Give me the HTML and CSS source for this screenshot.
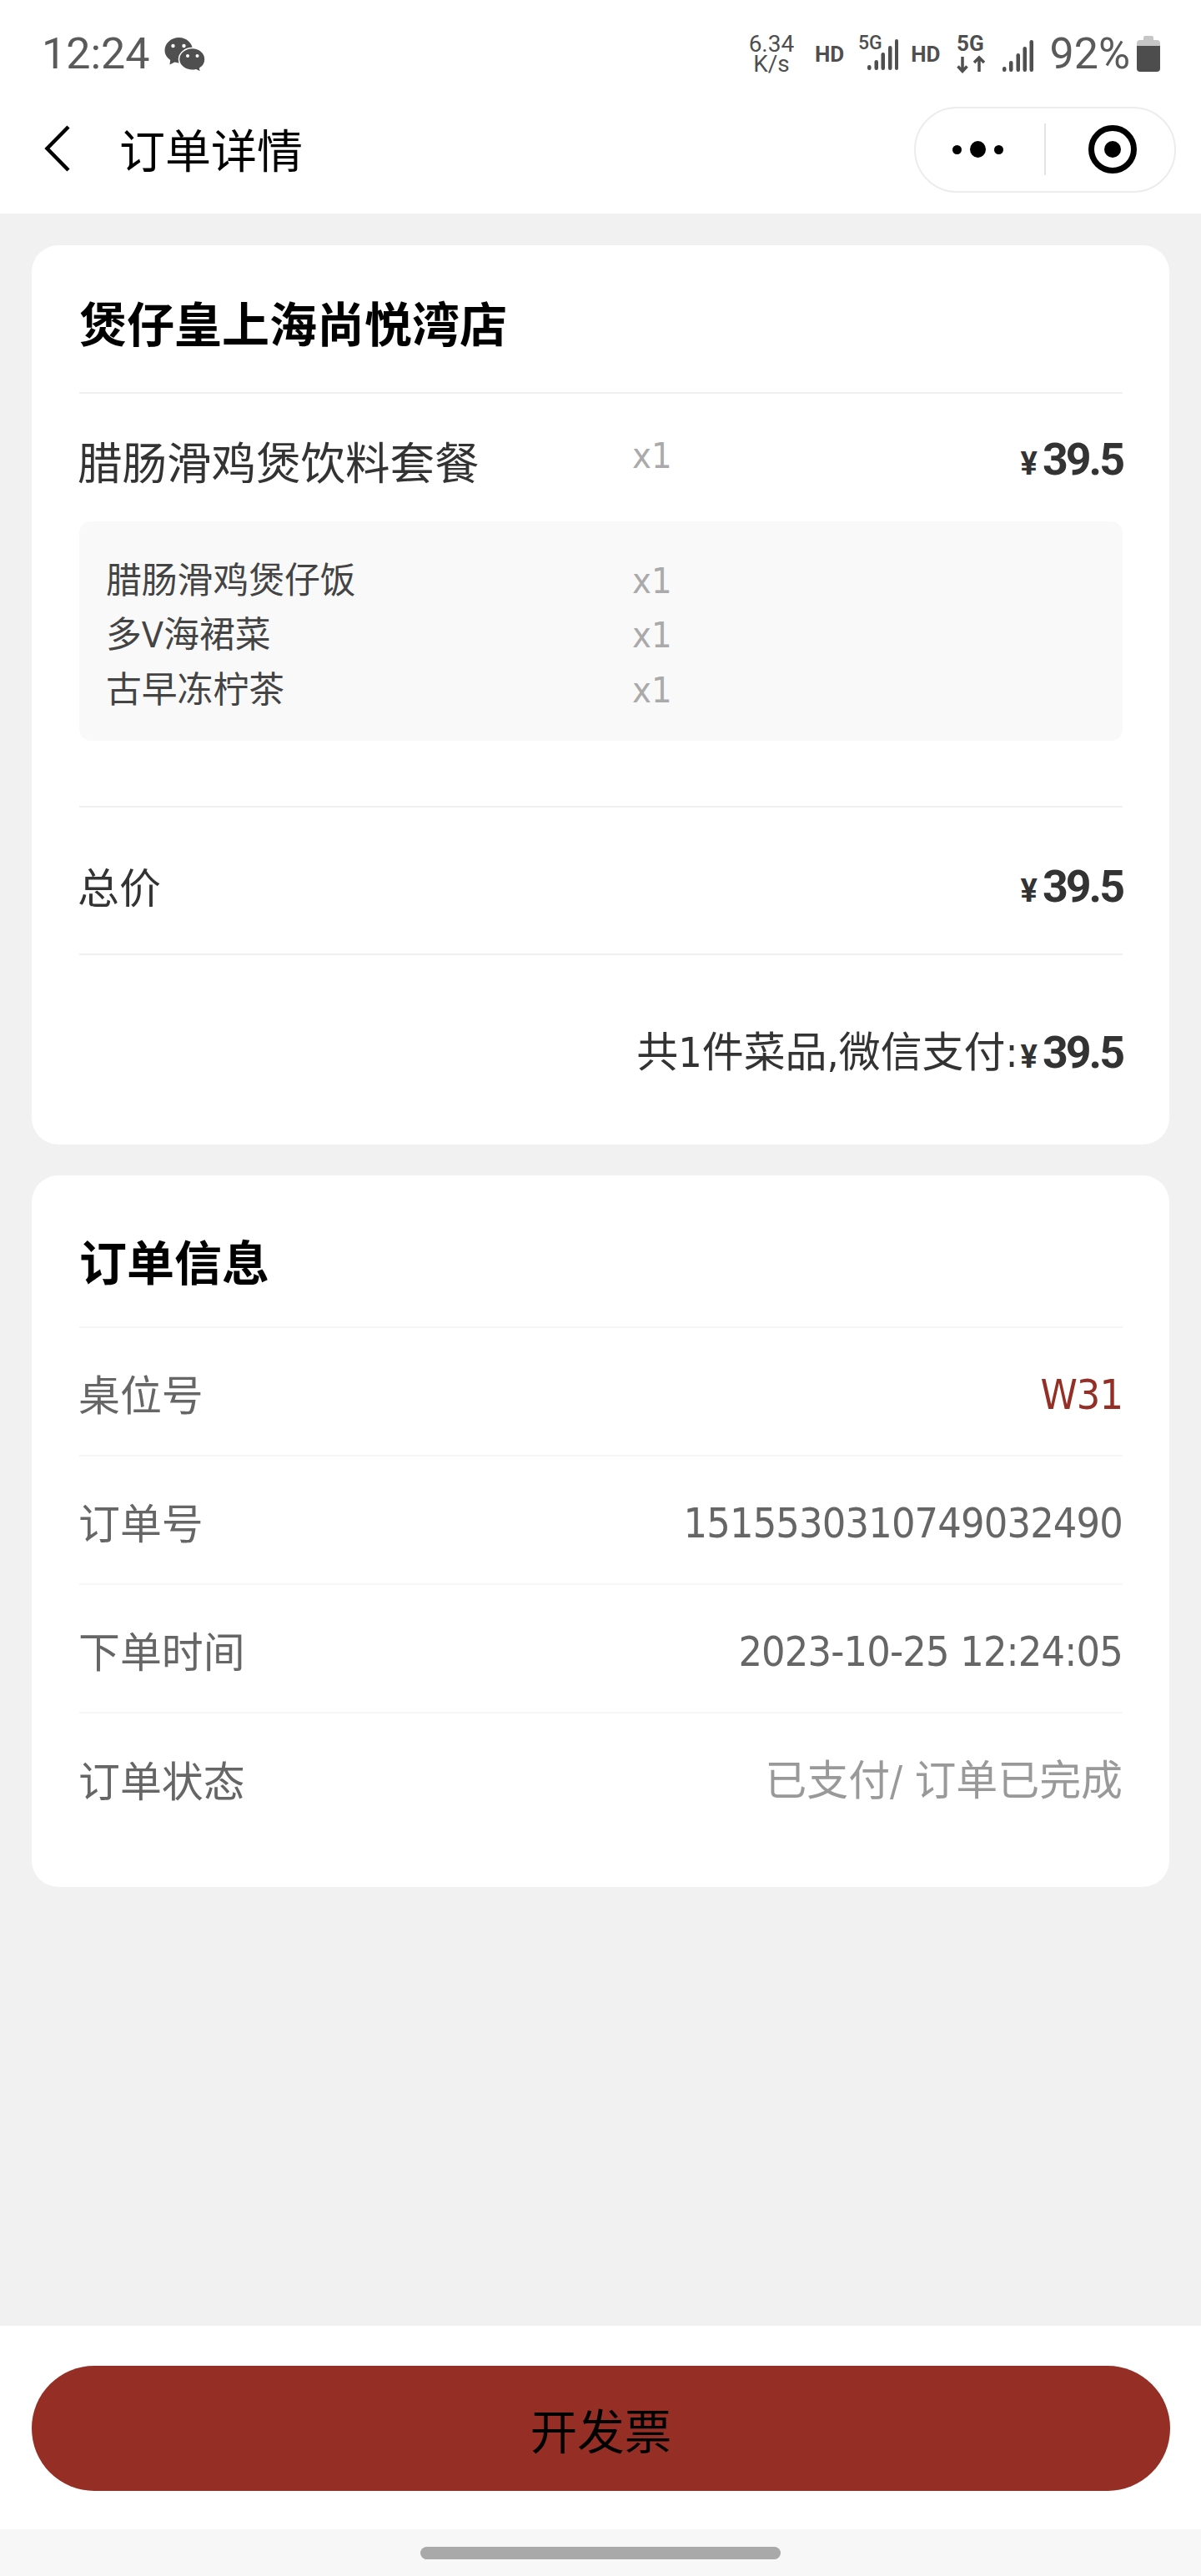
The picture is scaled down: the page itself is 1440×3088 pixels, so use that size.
FILE: index.html
```html
<!DOCTYPE html>
<html lang="zh-CN">
<head>
<meta charset="utf-8">
<title>订单详情</title>
<link rel="stylesheet" href="styles.css">
</head>
<body>
<header class="header">
  <div class="status">
    <span class="time">12:24</span>
    <svg class="wechat" width="50" height="42" viewBox="0 0 50 42">
      <path fill="#4f4f4f" d="M17.5 0C26.6 0 34 6.800 34 15.200S26.600 30.400 17.500 30.400c-1.800 0-3.500-.3-5.100-.8L6.500 32.500l.7-5.600C3 24.100.5 20 .5 15.200.5 6.800 8.400 0 17.500 0z"/>
      <circle cx="10.500" cy="10" r="2.200" fill="#fff"/>
      <circle cx="23.500" cy="10" r="2.200" fill="#fff"/>
      <path fill="#4f4f4f" stroke="#fff" stroke-width="1.500" d="M33.500 12.500C42 12.500 49 18.500 49 26c0 4.500-2.500 8.500-6.300 11l1 4.500-5.500-2.800c-1.500.4-3 .6-4.700.6C25 39.300 17.500 33.300 17.500 26S25 12.500 33.500 12.500z"/>
      <circle cx="28" cy="22" r="2" fill="#fff"/>
      <circle cx="39.500" cy="22" r="2" fill="#fff"/>
    </svg>
    <div class="status-right">
      <div class="speed">6.34<br>K/s</div>
      <span class="hd hd-first">HD</span>
      <svg class="sig-a" width="48" height="50" viewBox="0 -6 48 50">
        <text class="sig-label" x="0" y="16">5G</text>
        <rect x="11" y="35" width="4.500" height="6" rx="2.200" fill="#4f4f4f"/>
        <rect x="19.500" y="29" width="4.500" height="12" rx="2.200" fill="#4f4f4f"/>
        <rect x="27.500" y="20" width="4.500" height="21" rx="2.200" fill="#4f4f4f"/>
        <rect x="36" y="12" width="4.500" height="29" rx="2.200" fill="#4f4f4f"/>
        <rect x="44" y="4" width="4" height="37" rx="2" fill="#4f4f4f"/>
      </svg>
      <span class="hd hd-second">HD</span>
      <svg class="net" width="34" height="52" viewBox="0 -6 34 52">
        <text class="net-label" x="0" y="18">5G</text>
        <path d="M7 25v17M1.500 36.500 7 42.500l5.500-6M27 43V26M21 32l6-6 6 6" fill="none" stroke="#4f4f4f" stroke-width="3.500"/>
      </svg>
      <svg class="sig-b" width="37" height="38" viewBox="0 0 37 38">
        <rect x="0" y="32" width="4.500" height="6" rx="2.200" fill="#4f4f4f"/>
        <rect x="8" y="25" width="4.500" height="13" rx="2.200" fill="#4f4f4f"/>
        <rect x="16.500" y="16" width="4.500" height="22" rx="2.200" fill="#4f4f4f"/>
        <rect x="24.500" y="8" width="4.500" height="30" rx="2.200" fill="#4f4f4f"/>
        <rect x="32.500" y="0" width="4.500" height="38" rx="2.200" fill="#4f4f4f"/>
      </svg>
      <span class="battery-text">92%</span>
      <svg class="battery" width="28" height="43" viewBox="0 0 28 43">
        <path fill="#c6c6c6" d="M8 2a2 2 0 0 1 2-2h8a2 2 0 0 1 2 2v3h4a4 4 0 0 1 4 4v4H0V9a4 4 0 0 1 4-4h4z"/>
        <path fill="#4d4d4d" d="M0 12h28v27a4 4 0 0 1-4 4H4a4 4 0 0 1-4-4z"/>
      </svg>
    </div>
  </div>
  <nav class="nav">
    <svg class="back" width="32" height="56" viewBox="0 0 32 56">
      <path d="M29 2 3.500 28 29 54" fill="none" stroke="#000" stroke-width="4.500"/>
    </svg>
    <h1 class="nav-title">订单详情</h1>
    <div class="capsule">
      <div class="capsule-more">
        <span class="dot"></span><span class="dot dot-big"></span><span class="dot"></span>
      </div>
      <span class="capsule-line"></span>
      <div class="capsule-close"><span class="target"></span></div>
    </div>
  </nav>
</header>

<main class="main">
  <section class="card">
    <h2 class="card-title shop-title">煲仔皇上海尚悦湾店</h2>
    <div class="item">
      <span class="item-name">腊肠滑鸡煲饮料套餐</span>
      <span class="qty item-qty">x1</span>
      <span class="price"><span class="yen">¥</span><span class="num">39.5</span></span>
    </div>
    <div class="subs">
      <div class="sub"><span class="sub-name">腊肠滑鸡煲仔饭</span><span class="qty">x1</span></div>
      <div class="sub"><span class="sub-name">多V海裙菜</span><span class="qty">x1</span></div>
      <div class="sub"><span class="sub-name">古早冻柠茶</span><span class="qty">x1</span></div>
    </div>
    <div class="total">
      <span class="total-label">总价</span>
      <span class="price"><span class="yen">¥</span><span class="num">39.5</span></span>
    </div>
    <div class="paid">
      <span class="paid-text">共1件菜品,微信支付:</span>
      <span class="price"><span class="yen">¥</span><span class="num">39.5</span></span>
    </div>
  </section>

  <section class="card card-info">
    <h2 class="card-title info-title">订单信息</h2>
    <div class="info-row"><span class="info-label">桌位号</span><span class="accent">W31</span></div>
    <div class="info-row"><span class="info-label">订单号</span><span class="digits">1515530310749032490</span></div>
    <div class="info-row"><span class="info-label">下单时间</span><span class="digits">2023-10-25 12:24:05</span></div>
    <div class="info-row"><span class="info-label">订单状态</span><span class="muted">已支付/ 订单已完成</span></div>
  </section>
</main>

<footer class="footer">
  <button class="invoice" type="button">开发票</button>
</footer>
<div class="homebar"><span class="home-pill"></span></div>
</body>
</html>
```

FILE: styles.css
```css
* { box-sizing: border-box; }
html, body { margin: 0; padding: 0; }
body {
  width: 1440px;
  height: 3088px;
  display: flex;
  flex-direction: column;
  background: #f1f1f1;
  color: #333;
  font-family: "DejaVu Sans Condensed", "DejaVu Sans", "Noto Sans CJK SC", sans-serif;
}

/* header */
.header { background: #fff; height: 256px; flex: none; }
.status {
  height: 127px;
  display: flex;
  align-items: center;
  padding: 2px 49px 0 50px;
  color: #4f4f4f;
  font-family: Roboto, sans-serif;
}
.time { font-size: 52px; font-weight: 400; line-height: 60px; color: #5a5a5a; }
.wechat { margin-left: 17px; margin-top: 2px; }
.status-right { margin-left: auto; display: flex; align-items: center; }
.speed {
  width: 56px;
  text-align: center;
  font-size: 28px;
  line-height: 24px;
}
.hd { font-size: 26px; font-weight: 700; line-height: 30px; }
.hd-first { margin-left: 24px; }
.sig-a { margin-left: 17px; margin-bottom: 6px; }
.hd-second { margin-left: 15px; }
.net { margin-left: 20px; margin-top: 2px; margin-bottom: 6px; }
.sig-b { margin-left: 21px; margin-top: 4px; }
.sig-label { font: 500 23px Roboto, sans-serif; fill: #4f4f4f; }
.net-label { font: 700 26px Roboto, sans-serif; fill: #4f4f4f; }
.battery-text { margin-left: 19px; font-size: 52px; font-weight: 400; line-height: 60px; color: #5a5a5a; }
.battery { margin-left: 8px; }

.nav {
  height: 104px;
  display: flex;
  align-items: center;
  padding-left: 53px;
  padding-right: 30px;
}
.back { flex: none; margin-top: -2px; }
.nav-title {
  margin: -4px 0 0 58px;
  font-size: 55px;
  font-weight: 400;
  line-height: 70px;
  color: #000;
  font-family: "Noto Sans CJK SC", sans-serif;
}
.capsule {
  margin-left: auto;
  width: 314px;
  height: 103px;
  border: 2px solid #ececec;
  border-radius: 52px;
  display: flex;
  align-items: center;
}
.capsule-more {
  width: 154px;
  display: flex;
  align-items: center;
  justify-content: center;
  gap: 10px;
  padding-right: 6px;
}
.dot { width: 11px; height: 11px; border-radius: 50%; background: #000; }
.dot-big { width: 19px; height: 20px; }
.capsule-line { width: 2px; height: 62px; background: #e4e4e4; }
.capsule-close { flex: 1; display: flex; justify-content: center; padding-left: 6px; }
.target {
  width: 58px;
  height: 58px;
  border: 7px solid #000;
  border-radius: 50%;
  display: flex;
  align-items: center;
  justify-content: center;
}
.target::before {
  content: "";
  width: 20px;
  height: 20px;
  border-radius: 50%;
  background: #000;
}

/* main */
.main { flex: 1; padding: 38px 38px 0; }
.card {
  background: #fff;
  border-radius: 32px;
  padding: 0 56px 0 57px;
  height: 1078px;
}
.card-info { margin-top: 37px; height: 853px; }
.card-title {
  margin: 0;
  font-size: 57px;
  line-height: 58px;
  font-weight: 700;
  color: #000;
  font-family: "Noto Sans CJK SC", sans-serif;
  border-bottom: 2px solid #f0f0f0;
}
.shop-title { padding: 62px 0 56px; }
.info-title { padding: 72px 0 51px; border-bottom-color: #f5f5f5; }

.item {
  height: 153px;
  padding-top: 17px;
  display: flex;
  align-items: center;
}
.item-name { width: 665px; margin-left: -2px; font-size: 53.5px; line-height: 64px; color: #333; }
.qty { font-size: 43px; line-height: 50px; color: #aaa; }
.item-qty { margin-bottom: 22px; }
.price {
  margin-left: auto;
  display: inline-flex;
  align-items: baseline;
  font-family: Roboto, sans-serif;
  font-weight: 700;
  color: #333;
}
.item .price { margin-bottom: 12px; }
.yen { font-size: 38px; margin-right: 6px; }
.num { font-size: 53.76px; line-height: 64px; letter-spacing: -3px; }

.subs {
  background: #f9f9f9;
  border-radius: 14px;
  padding: 38px 0 28px 34px;
}
.sub { height: 65.5px; display: flex; align-items: center; }
.sub-name { width: 631px; margin-left: -2px; font-size: 42.8px; line-height: 50px; color: #444; }

.total {
  margin-top: 78px;
  border-top: 2px solid #f0f0f0;
  border-bottom: 2px solid #f0f0f0;
  height: 179px;
  padding-top: 22px;
  display: flex;
  align-items: center;
}
.total .price { margin-bottom: 6px; }
.total-label { margin-left: -2px; font-size: 49.92px; line-height: 60px; color: #333; }
.paid {
  height: 227px;
  padding-top: 8px;
  display: flex;
  align-items: center;
  justify-content: flex-end;
}
.paid-text { font-size: 49.92px; line-height: 60px; color: #333; }
.paid .price { margin-left: 3px; }

.info-row {
  height: 154px;
  padding-top: 12px;
  border-bottom: 2px solid #f6f6f6;
  display: flex;
  align-items: center;
  justify-content: space-between;
  font-size: 49.92px;
  line-height: 60px;
  color: #666;
}
.info-row:last-child { border-bottom: 0; }
.info-label { margin-left: -1px; }
.digits { letter-spacing: -0.85px; margin-bottom: 4px; }
.accent { color: #952f25; letter-spacing: -1px; margin-bottom: 4px; }
.muted { color: #999; margin-bottom: 4px; }

/* footer */
.footer {
  flex: none;
  height: 244px;
  background: #fff;
  padding: 48px 37px 0 38px;
}
.invoice {
  display: block;
  width: 100%;
  height: 150px;
  border: 0;
  border-radius: 75px;
  background: #952f25;
  color: #000;
  font-size: 56.5px;
  line-height: 60px;
  font-family: "Noto Sans CJK SC", sans-serif;
}
.homebar {
  flex: none;
  height: 56px;
  background: #f7f7f7;
  padding-top: 21px;
  display: flex;
  justify-content: center;
  align-items: flex-start;
}
.home-pill { width: 432px; height: 15px; border-radius: 8px; background: #a9a9a9; }
```
